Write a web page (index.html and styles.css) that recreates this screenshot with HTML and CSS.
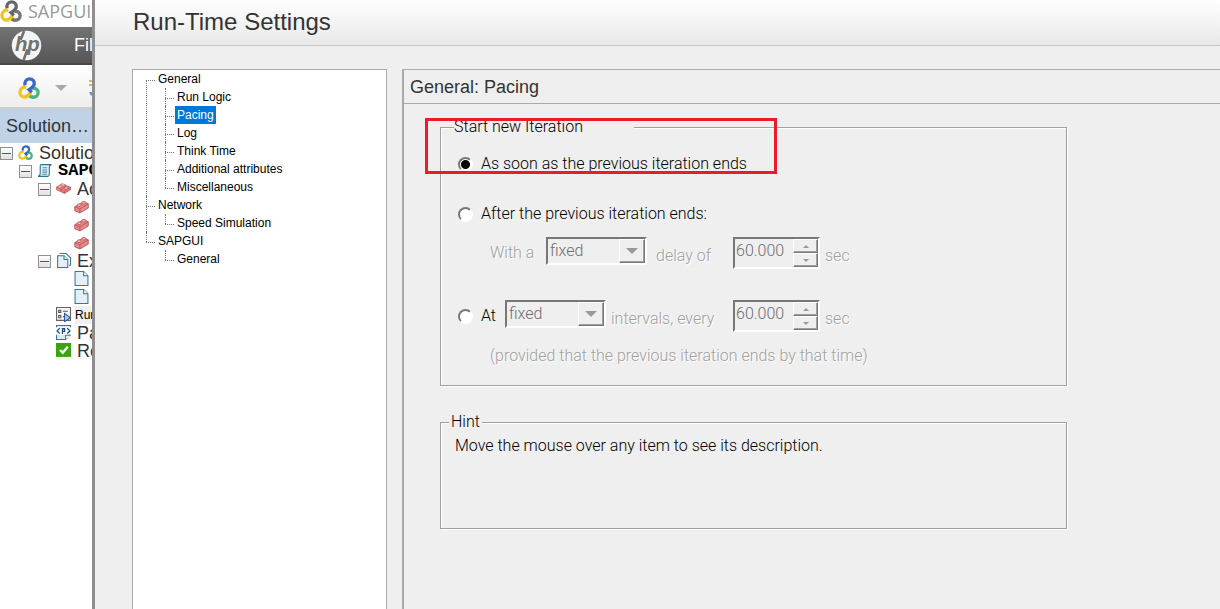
FILE: index.html
```html
<!DOCTYPE html>
<html lang="en">
<head>
  <meta charset="UTF-8" />
  <meta name="viewport" content="width=device-width, initial-scale=1.0" />
  <title>Run-Time Settings</title>
  <link rel="stylesheet" href="styles.css">
</head>
<body>
  <svg class="defs" aria-hidden="true">
    <symbol id="rings" viewBox="0 0 20 20">
      <g fill="none" stroke-width="3">
        <path class="ring-right" d="M13 10.500c3-.8 5.300 1 5.300 3.700 0 2.500-2 4.200-4.300 4.200-2 0-3.500-1.200-4-3"/>
        <path class="ring-left" d="M7.500 9.500C4.500 8.600 1.700 10.800 1.700 13.800c0 2.500 2 4.400 4.300 4.400 2.800 0 4-2 5.500-4.200"/>
        <path class="ring-top" d="M6.500 7.500C5.500 4.500 7.500 1.700 10.500 1.700c2.500 0 4.300 1.800 4.300 4.200 0 2.800-2.200 4-4.800 5.600l2.500 2.500"/>
      </g>
    </symbol>
    <symbol id="script" viewBox="0 0 14 14">
      <path d="M4 1.500h9.500c-1.500.3-2 1-2 3v6c0 1.500-.5 2-1.500 2H1c1.500-.3 2-1 2-3V3c0-1 .3-1.500 1-1.500z" fill="#e3f0f7" stroke="#33708f"/>
      <path d="M5 4.500h4.500M5 6.500h4.500M5 8.500h4.500M5 10.500h4.500" stroke="#4d8eab"/>
    </symbol>
    <symbol id="brick" viewBox="0 0 14 14">
      <path d="M.7 7.200L9 2.500l4.300 2v4L5.500 13 .7 11z" fill="#e58a8a" stroke="#b95155" stroke-width=".8"/>
      <path d="M.7 7.200l4.800 2 7.800-4.700M5.500 9.200V13" fill="none" stroke="#b95155" stroke-width=".8"/>
      <ellipse cx="4.800" cy="5.800" rx="1.900" ry="1.300" fill="#f2b2b2" stroke="#b95155" stroke-width=".7"/>
      <ellipse cx="9.200" cy="3.500" rx="1.900" ry="1.300" fill="#f2b2b2" stroke="#b95155" stroke-width=".7"/>
    </symbol>
    <symbol id="bricks" viewBox="0 0 16 14">
      <path d="M.6 5.500L6.500 1.800l4 1.600v3L4.500 10 .6 8.300z" fill="#e58a8a" stroke="#b95155" stroke-width=".8"/>
      <path d="M5.500 8.500l6-4.500 4 1.600v2.600L9 12.200l-3.500-1.600z" fill="#df7a7c" stroke="#b95155" stroke-width=".8"/>
      <path d="M.6 5.500l3.900 1.600 6-3.700M4.500 7.100V10M9 9.500l6.500-3.900M9 9.500v2.700" fill="none" stroke="#b95155" stroke-width=".7"/>
      <path d="M3 5h2M6.500 3h2M10 6.500h2" stroke="#fbdcdc"/>
    </symbol>
    <symbol id="page" viewBox="0 0 14 14">
      <path d="M1 .5h8l4 4v9H1z" fill="#e4eff7" stroke="#3a7894"/>
      <path d="M9 .5v4h4" fill="#fff" stroke="#3a7894"/>
    </symbol>
    <symbol id="pages" viewBox="0 0 14 14">
      <path d="M4 1V.5h5.500l4 4v7H12" fill="#fff" stroke="#3a7894"/>
      <path d="M1.500 2.500h6l3.500 3.500v7.500H1.500z" fill="#e4eff7" stroke="#3a7894"/>
      <path d="M7.500 2.500V6H11" fill="#fff" stroke="#3a7894"/>
    </symbol>
    <symbol id="runlogic" viewBox="0 0 14 14">
      <path d="M.5.5h13v12H.5z" fill="#f6f6f6" stroke="#666"/>
      <path d="M2.500 3h2v2h-2zM2.500 8h2v2h-2z" fill="none" stroke="#555"/>
      <path d="M6.500 4H11M6.500 9H8" stroke="#555"/>
      <path d="M8 6l5.500 4L8 13.700z" fill="#a9c8ee" stroke="#2c5795"/>
    </symbol>
    <symbol id="params" viewBox="0 0 14 14">
      <path d="M.5 2V.5h13V2M.5 9v4.500H9l4.500-4.500" fill="#d8eaf4" stroke="#3a7894"/>
      <path d="M3.500 3L1 5.500 3.500 8M10.500 3L13 5.500 10.500 8M6 8.500v-5h2v2.500H6" fill="none" stroke="#1d4f78" stroke-width="1.200"/>
      <path d="M9 13.500V9.500h4.500" fill="#fff" stroke="#3a7894"/>
    </symbol>
    <symbol id="check" viewBox="0 0 14 14">
      <path d="M0 0h14v13H0z" fill="#3aa60f"/>
      <path d="M3.800 6.500l2.500 2.500L11 3.500" fill="none" stroke="#fff" stroke-width="2.200"/>
    </symbol>
  </svg>

  <aside class="app">
    <div class="app-title">
      <svg class="app-icon gray"><use href="#rings"/></svg>
      <span>SAPGUI</span>
    </div>
    <nav class="menubar">
      <svg class="hp" viewBox="0 0 32 32" aria-label="hp">
        <circle cx="16" cy="16" r="15.200" fill="#f4f4f4"/>
        <path d="M13.500 1L10 10M17 20l-4 11" stroke="#707070" stroke-width="2.600"/>
        <text x="4" y="22">hp</text>
      </svg>
      <a href="#">File</a>
    </nav>
    <div class="toolbar">
      <svg class="tool"><use href="#rings"/></svg>
      <svg class="caret" viewBox="0 0 12 6"><path d="M0 0h12L6 6z" fill="#aaa"/></svg>
      <svg class="next" viewBox="0 0 16 18"><path d="M0 2h7M0 6h7" stroke="#e0b84c" stroke-width="2"/><path d="M0 13h5l-3 4z" fill="#5aa0b8"/></svg>
    </div>
    <div class="panel-title">Solution…</div>
    <ul class="solution">
      <li><i class="toggle"></i><svg><use href="#rings"/></svg><span>Solution</span></li>
      <li class="lv1"><i class="toggle"></i><svg><use href="#script"/></svg><b>SAPGUI</b></li>
      <li class="lv2"><i class="toggle"></i><svg><use href="#bricks"/></svg><span>Actions</span></li>
      <li class="lv4"><svg><use href="#brick"/></svg></li>
      <li class="lv4"><svg><use href="#brick"/></svg></li>
      <li class="lv4"><svg><use href="#brick"/></svg></li>
      <li class="lv2"><i class="toggle"></i><svg><use href="#pages"/></svg><span>Extra Files</span></li>
      <li class="lv4"><svg><use href="#page"/></svg></li>
      <li class="lv4"><svg><use href="#page"/></svg></li>
      <li class="lv3"><svg><use href="#runlogic"/></svg><em>Runtime Settings</em></li>
      <li class="lv3"><svg><use href="#params"/></svg><span>Parameters</span></li>
      <li class="lv3"><svg><use href="#check"/></svg><span>Replay</span></li>
    </ul>
  </aside>

  <main class="dialog">
    <h1>Run-Time Settings</h1>
    <div class="content">
      <nav class="tree">
        <ul>
          <li><a href="#">General</a>
            <ul>
              <li><a href="#">Run Logic</a></li>
              <li><a href="#" class="selected">Pacing</a></li>
              <li><a href="#">Log</a></li>
              <li><a href="#">Think Time</a></li>
              <li><a href="#">Additional attributes</a></li>
              <li><a href="#">Miscellaneous</a></li>
            </ul>
          </li>
          <li><a href="#">Network</a>
            <ul>
              <li><a href="#">Speed Simulation</a></li>
            </ul>
          </li>
          <li><a href="#">SAPGUI</a>
            <ul>
              <li><a href="#">General</a></li>
            </ul>
          </li>
        </ul>
      </nav>

      <section class="pane">
        <h2>General: Pacing</h2>
        <form class="form">
          <fieldset class="iteration">
            <legend>Start new Iteration</legend>
            <div class="row">
              <input type="radio" name="pacing" id="asap" checked />
              <label for="asap">As soon as the previous iteration ends</label>
            </div>
            <div class="row">
              <input type="radio" name="pacing" id="after" />
              <label for="after">After the previous iteration ends:</label>
            </div>
            <div class="delay off">
              <label for="delayType">With a</label>
              <span class="combo"><select id="delayType" disabled><option>fixed</option></select><i></i></span>
              <label for="delay" class="unit">delay of</label>
              <span class="spin">
                <input type="text" id="delay" value="60.000" disabled />
                <button type="button" class="up" aria-label="Up" disabled></button>
                <button type="button" class="down" aria-label="Down" disabled></button>
              </span>
              <span class="unit">sec</span>
            </div>
            <div class="interval off">
              <input type="radio" name="pacing" id="at" />
              <label for="at" class="on">At</label>
              <span class="combo"><select id="intervalType" aria-label="Interval type" disabled><option>fixed</option></select><i></i></span>
              <label for="interval" class="unit">intervals, every</label>
              <span class="spin">
                <input type="text" id="interval" value="60.000" disabled />
                <button type="button" class="up" aria-label="Up" disabled></button>
                <button type="button" class="down" aria-label="Down" disabled></button>
              </span>
              <span class="unit">sec</span>
            </div>
            <p class="note off">(provided that the previous iteration ends by that time)</p>
            <div class="mark"></div>
          </fieldset>

          <fieldset class="hint">
            <legend>Hint</legend>
            <p>Move the mouse over any item to see its description.</p>
          </fieldset>
        </form>
      </section>
    </div>
  </main>
</body>
</html>
```

FILE: styles.css
```css
* {
  box-sizing: border-box;
}
body {
  display: flex;
  height: 100vh;
  margin: 0;
  overflow: hidden;
  background: #fff;
  font-family: "Liberation Sans", Arial, sans-serif;
}
ul {
  list-style: none;
  margin: 0;
  padding: 0;
}
a {
  color: inherit;
  text-decoration: none;
}
.defs {
  position: absolute;
  width: 0;
  height: 0;
}

/* main window behind the dialog */
.app {
  flex: 0 0 92px;
  overflow: hidden;
  white-space: nowrap;
  color: #333;
}
.app svg {
  flex: none;
}
.ring-top { stroke: var(--top, #3a68c4); }
.ring-left { stroke: var(--left, #f2c31c); }
.ring-right { stroke: var(--right, #4fb381); }
.gray {
  --top: #666;
  --right: #777;
}
.app-title {
  display: flex;
  align-items: center;
  gap: 6px;
  height: 27px;
  padding-bottom: 6px;
  font-family: "Open Sans", sans-serif;
  font-size: 18px;
  color: #999;
}
.app-icon {
  width: 22px;
  height: 22px;
}
.menubar {
  display: flex;
  align-items: center;
  gap: 32px;
  height: 38px;
  padding-left: 11px;
  background: linear-gradient(#737373, #565656);
  border-bottom: 2px solid #484848;
  color: #fff;
  font-size: 18px;
}
.hp {
  width: 31px;
  height: 31px;
}
.hp text {
  font: italic bold 21px "Liberation Sans", sans-serif;
  fill: #707070;
}
.toolbar {
  display: flex;
  align-items: center;
  height: 44px;
  padding: 3px 0 0 18px;
  background: linear-gradient(#fff, #eee);
  border-bottom: 2px solid #ccc;
}
.tool {
  width: 22px;
  height: 22px;
}
.caret {
  width: 12px;
  height: 6px;
  margin: 0 22px 0 15px;
}
.next {
  width: 16px;
  height: 18px;
}
.panel-title {
  height: 34px;
  padding-left: 6px;
  background: #bfd2e8;
  font-size: 18px;
  line-height: 34px;
}
.solution {
  padding-top: 1px;
}
.solution li {
  display: flex;
  align-items: center;
  height: 18px;
  font-size: 18px;
  line-height: 18px;
}
.solution svg {
  width: 15px;
  height: 15px;
  margin: 0 6px 2px 0;
}
.solution .lv1 { padding-left: 19px; }
.solution .lv2 { padding-left: 38px; }
.solution .lv3 { padding-left: 56px; }
.solution .lv4 { padding-left: 74px; }
.solution b {
  font-family: "Liberation Mono", monospace;
  font-size: 17px;
  color: #000;
}
.solution em {
  margin-left: -2px;
  background: #f0f0f0;
  font-size: 12px;
  font-style: normal;
  color: #000;
}
.toggle {
  flex: none;
  display: flex;
  align-items: center;
  width: 13px;
  height: 13px;
  margin-right: 5px;
  padding: 0 1px;
  border: 1px solid #919191;
  background: linear-gradient(#fff, #e0e0e0);
}
.toggle::before {
  content: "";
  flex: 1;
  height: 1px;
  background: #3a55a5;
}

/* dialog */
.dialog {
  flex: 1;
  display: flex;
  flex-direction: column;
  min-width: 0;
  border-left: 3px solid #8f8d90;
  background: #efefef;
}
h1 {
  height: 46px;
  margin: 0;
  padding-left: 38px;
  background: linear-gradient(#fff, #e8e8e8);
  border-bottom: 1px solid #c8c8c8;
  font-size: 24px;
  font-weight: normal;
  line-height: 44px;
  color: #333;
}
.content {
  flex: 1;
  display: flex;
  gap: 15px;
  padding: 23px 0 0 37px;
}
.tree {
  width: 255px;
  padding-left: 13px;
  border: 1px solid #aaa;
  border-bottom: 0;
  background: #fff;
  font-size: 12px;
  line-height: 18px;
  color: #000;
}
.tree li {
  position: relative;
  padding-left: 10px;
}
.tree ul ul {
  margin-left: 9px;
}
.tree a {
  display: inline-block;
  height: 18px;
  padding: 0 2px;
  vertical-align: top;
}
.tree .selected {
  background: #0078d7;
  color: #fff;
}
.tree li::before {
  content: "";
  position: absolute;
  top: 10px;
  left: 0;
  width: 9px;
  border-top: 1px dotted #777;
}
.tree li::after {
  content: "";
  position: absolute;
  top: 0;
  bottom: 0;
  left: 0;
  border-left: 1px dotted #777;
}
.tree > ul > li:first-child::after {
  top: 10px;
}
.tree li:last-child::after {
  bottom: auto;
  height: 10px;
}
.pane {
  flex: 1;
  border: 1px solid #aaa;
  border-width: 1px 0 0 2px;
}
h2 {
  height: 34px;
  margin: 0;
  padding-left: 6px;
  border-bottom: 1px solid #aaa;
  font-size: 18px;
  font-weight: normal;
  line-height: 34px;
  color: #333;
}

/* pacing form */
.form {
  padding: 13px 36px;
  font-family: Roboto, sans-serif;
  font-size: 16px;
  font-weight: 300;
  line-height: 20px;
  color: #000;
}
fieldset {
  position: relative;
  max-width: 627px;
  margin: 0;
  padding: 0;
  border: 1px solid #a0a0a0;
  box-shadow: 1px 1px 0 #fff, inset 1px 1px 0 #fff;
}
legend {
  margin-left: 8px;
  padding: 0 2px;
  background: #efefef;
}
.iteration {
  height: 269px;
  padding-left: 17px;
}
.iteration legend {
  width: 180px;
  margin-left: -4px;
  padding: 0;
}
.row {
  display: flex;
  align-items: center;
  gap: 8px;
  margin: 17px 0 30px;
}
.row + .row {
  margin-bottom: 13px;
}
.delay, .interval {
  display: grid;
  align-items: center;
}
.delay {
  grid-template-columns: 56px 110px 77px 92px auto;
  margin: 0 0 31px 32px;
}
.interval {
  grid-template-columns: 23px 24px 106px 122px 92px auto;
}
.off {
  color: #a0a0a0;
  text-shadow: 1px 1px 0 #fff;
}
.on {
  color: #000;
  text-shadow: none;
}
.unit {
  padding-top: 6px;
}
.note {
  margin: 14px 0 0 32px;
}
input[type=radio] {
  appearance: none;
  width: 15px;
  height: 15px;
  margin: 0;
  border: 2px solid;
  border-color: #777 #fff #fff #777;
  border-radius: 50%;
  background: #fff;
}
input[type=radio]:checked {
  background: radial-gradient(circle, #000 4px, #fff 5px);
}
.combo, .spin {
  border: 2px solid;
  border-color: #777 #fff #fff #777;
}
.combo {
  align-self: start;
  display: flex;
  width: 101px;
  height: 28px;
}
.combo select {
  appearance: none;
  flex: 1;
  min-width: 0;
  padding: 0 2px;
  border: 0;
  background: none;
  font: inherit;
  color: #6d6d6d;
  opacity: 1;
}
.combo i {
  display: flex;
  align-items: center;
  justify-content: center;
  width: 26px;
  border: 1px solid;
  border-color: #fff #777 #777 #fff;
  box-shadow: inset -1px -1px 0 #a0a0a0;
}
.combo i::before {
  content: "";
  border: 6px solid transparent;
  border-top-color: #999;
  border-bottom: 0;
}
.spin {
  display: grid;
  grid-template-columns: 1fr 25px;
  grid-template-rows: 14px 14px;
  width: 87px;
  height: 32px;
}
.spin input {
  grid-row: 1 / 3;
  min-width: 0;
  padding: 0 1px 5px;
  border: 0;
  background: none;
  font: inherit;
  color: #6d6d6d;
}
.spin button {
  display: flex;
  align-items: center;
  justify-content: center;
  padding: 0;
  border: 1px solid;
  border-color: #fff #777 #777 #fff;
  background: #efefef;
  box-shadow: inset -1px -1px 0 #a0a0a0;
}
.spin button::before {
  content: "";
  border: 3px solid transparent;
}
.spin .up::before {
  border-bottom-color: #999;
  border-top: 0;
}
.spin .down::before {
  border-top-color: #999;
  border-bottom: 0;
}
/* red frame over the selected option */
.mark {
  position: absolute;
  top: -19px;
  left: -16px;
  width: 352px;
  height: 56px;
  border: 3px solid #ed1c24;
}
.hint {
  height: 117px;
  margin-top: 26px;
}
.hint p {
  margin: 4px 14px;
}
```
